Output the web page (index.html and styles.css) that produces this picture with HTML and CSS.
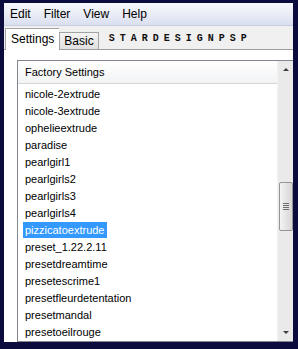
FILE: index.html
```html
<!DOCTYPE html>
<html lang="en">
<head>
  <meta charset="UTF-8" />
  <title>Filter Presets</title>
  <link rel="stylesheet" href="styles.css">
</head>
<body>

<div class="window">
  <div class="menubar">
    <span class="menu">Edit</span>
    <span class="menu">Filter</span>
    <span class="menu">View</span>
    <span class="menu">Help</span>
  </div>

  <div class="tabstrip">
    <div class="tab active">Settings</div>
    <div class="tab">Basic</div>
    <div class="brand">STARDESIGNPSP</div>
  </div>

  <div class="panel">
    <div class="listbox">
      <div class="list">
        <div class="header">Factory Settings</div>
        <div class="rows">
          <div class="row"><span>nicole-2extrude</span></div>
          <div class="row"><span>nicole-3extrude</span></div>
          <div class="row"><span>ophelieextrude</span></div>
          <div class="row"><span>paradise</span></div>
          <div class="row"><span>pearlgirl1</span></div>
          <div class="row"><span>pearlgirls2</span></div>
          <div class="row"><span>pearlgirls3</span></div>
          <div class="row"><span>pearlgirls4</span></div>
          <div class="row selected"><span>pizzicatoextrude</span></div>
          <div class="row"><span>preset_1.22.2.11</span></div>
          <div class="row"><span>presetdreamtime</span></div>
          <div class="row"><span>presetescrime1</span></div>
          <div class="row"><span>presetfleurdetentation</span></div>
          <div class="row"><span>presetmandal</span></div>
          <div class="row"><span>presetoeilrouge</span></div>
        </div>
      </div>
      <div class="scrollbar">
        <div class="arrow up"></div>
        <div class="track">
          <div class="thumb"><div class="grip"></div></div>
        </div>
        <div class="arrow down"></div>
      </div>
    </div>
  </div>
</div>

</body>
</html>
```

FILE: styles.css
```css
html, body {
  margin: 0;
  height: 100%;
}
body {
  background: #0c0b3d;
  font-family: 'Liberation Sans', Arial, sans-serif;
  color: #000;
}
.window {
  margin: 3px 5px 0 4px;
  height: 339px;
  background: #fff;
  display: flex;
  flex-direction: column;
  overflow: hidden;
}
.menubar {
  height: 22px;
  display: flex;
  align-items: center;
  padding-left: 6px;
  gap: 13px;
  background: linear-gradient(#f7f8fc, #e9ebf5 55%, #dadff0);
  border-bottom: 1px solid #c9cde0;
  font-size: 12px;
}
.tabstrip {
  height: 23px;
  display: flex;
  align-items: flex-end;
  background: #f0f0f0;
  border-bottom: 1px solid #9d9d9d;
  padding-left: 1px;
}
.tab {
  height: 16px;
  padding: 0 4px;
  font-size: 12px;
  line-height: 16px;
  border: 1px solid #a3a3a3;
  border-bottom: none;
  background: linear-gradient(#f3f3f3, #e0e0e0);
}
.tab.active {
  height: 21px;
  line-height: 20px;
  padding: 0 5px;
  margin-bottom: -1px;
  background: #fff;
  border-right: none;
}
.brand {
  align-self: center;
  margin: 3px 0 0 10px;
  font-family: 'Liberation Mono', monospace;
  font-size: 10px;
  line-height: 10px;
  font-weight: bold;
  letter-spacing: 5px;
  color: #111;
}
.panel {
  flex: 1;
  padding: 10px 0 0 13px;
  background: #fff;
}
.listbox {
  height: 280px;
  display: flex;
  border: 1px solid #828790;
  border-right: none;
}
.list {
  flex: 1;
  overflow: hidden;
}
.header {
  height: 22px;
  line-height: 22px;
  padding-left: 7px;
  font-size: 11px;
  background: linear-gradient(#fff, #f2f3f5);
  border-bottom: 1px solid #d5d5d5;
}
.rows {
  padding: 2px 0 0 5px;
}
.row {
  height: 17px;
  font-size: 11px;
}
.row span {
  display: inline-block;
  height: 16px;
  line-height: 16px;
  padding: 0 2px;
}
.row.selected span {
  background: #3399ff;
  color: #fff;
}
.scrollbar {
  width: 15px;
  display: flex;
  flex-direction: column;
  background: #eaeaea;
  border-left: 1px solid #f2f2f2;
}
.arrow {
  height: 17px;
  display: flex;
  align-items: center;
  justify-content: center;
}
.arrow::before {
  content: '';
  border-left: 3px solid transparent;
  border-right: 3px solid transparent;
}
.arrow.up::before {
  border-bottom: 3px solid #3c3c3c;
}
.arrow.down::before {
  border-top: 3px solid #3c3c3c;
}
.track {
  flex: 1;
  padding-top: 104px;
}
.thumb {
  height: 47px;
  margin-left: 1px;
  border: 1px solid #959595;
  border-radius: 2px;
  background: linear-gradient(90deg, #f4f4f4, #e4e4e4 50%, #d6d6d6);
  display: flex;
  align-items: center;
  justify-content: center;
}
.grip {
  width: 6px;
  height: 7px;
  background: repeating-linear-gradient(#6e6e6e 0 1px, transparent 1px 2px);
}
```
